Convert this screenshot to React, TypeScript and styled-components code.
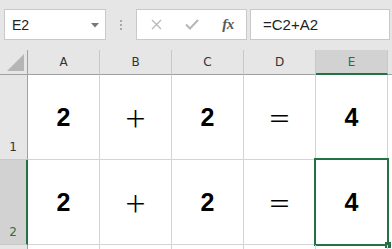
import React from "react";
import styled, { createGlobalStyle } from "styled-components";

const Global = createGlobalStyle`
  html, body { margin: 0; padding: 0; background: #ffffff; overflow: hidden; }
  body { font-family: "Liberation Sans", Arial, sans-serif; }
`;

const GREEN = "#217346";

const Page = styled.div`
  width: 392px;
  height: 249px;
  overflow: hidden;
  background: #fff;
`;

const Toolbar = styled.div`
  display: flex;
  align-items: flex-start;
  height: 50px;
  box-sizing: border-box;
  padding: 9px 2px 0 4px;
  background: #e6e6e6;
`;

const Box = styled.div<{ $w?: number }>`
  box-sizing: border-box;
  height: 31px;
  background: #ffffff;
  border: 1px solid #c9c9c9;
  display: flex;
  align-items: center;
  ${(p) => (p.$w ? `width: ${p.$w}px; flex: none;` : "flex: 1;")}
`;

const NameText = styled.span`
  flex: 1;
  padding-left: 7px;
  font-size: 14px;
  color: #222;
`;

const Arrow = styled.svg`
  width: 8px;
  height: 5px;
  margin-right: 6px;
  margin-top: 1px;
`;

const Dots = styled.div`
  width: 30px;
  height: 31px;
  display: flex;
  flex-direction: column;
  align-items: center;
  justify-content: center;
  gap: 2px;
  flex: none;
`;

const Dot = styled.span`
  width: 2px;
  height: 2px;
  background: #a8a8a8;
`;

const IconBtn = styled.div`
  width: 36px;
  height: 29px;
  display: flex;
  align-items: center;
  justify-content: center;
  flex: none;
`;

const Fx = styled.span`
  font-family: "Liberation Serif", "Times New Roman", serif;
  font-style: italic;
  font-weight: 700;
  font-size: 15px;
  color: #595959;
  letter-spacing: -0.5px;
`;

const FormulaText = styled.span`
  padding-left: 12px;
  font-size: 15px;
  color: #222;
`;

const Sheet = styled.div`
  display: grid;
  grid-template-columns: 28px repeat(5, 72px) 1fr;
  grid-template-rows: 25px 85px 85px 85px;
`;

const Corner = styled.div`
  box-sizing: border-box;
  background: #e6e6e6;
  border-right: 1px solid #a0a0a0;
  border-bottom: 1px solid #a0a0a0;
  display: flex;
  align-items: flex-end;
  justify-content: flex-end;
  padding: 0 3px 3px 0;
`;

const ColHead = styled.div<{ $sel?: boolean }>`
  box-sizing: border-box;
  background: ${(p) => (p.$sel ? "#d2d2d2" : "#e6e6e6")};
  border-right: 1px solid #c8c8c8;
  border-bottom: ${(p) => (p.$sel ? `2px solid ${GREEN}` : "1px solid #a0a0a0")};
  display: flex;
  align-items: center;
  justify-content: center;
  padding-top: ${(p) => (p.$sel ? "1px" : "0")};
  font-family: "DejaVu Sans", sans-serif;
  font-size: 12px;
  color: ${(p) => (p.$sel ? GREEN : "#333")};
`;

const HeadFill = styled.div`
  background: #e6e6e6;
  border-bottom: 1px solid #a0a0a0;
`;

const RowHead = styled.div<{ $sel?: boolean }>`
  box-sizing: border-box;
  background: ${(p) => (p.$sel ? "#d2d2d2" : "#e6e6e6")};
  border-right: ${(p) => (p.$sel ? `2px solid ${GREEN}` : "1px solid #a0a0a0")};
  border-bottom: 1px solid #c8c8c8;
  display: flex;
  align-items: flex-end;
  justify-content: center;
  padding: 0 ${(p) => (p.$sel ? "0" : "1px")} 5px 0;
  font-family: "DejaVu Sans", sans-serif;
  font-size: 12px;
  color: ${(p) => (p.$sel ? GREEN : "#333")};
`;

const Cell = styled.div<{ $op?: boolean }>`
  position: relative;
  box-sizing: border-box;
  border-right: 1px solid #d4d4d4;
  border-bottom: 1px solid #d4d4d4;
  display: flex;
  align-items: center;
  justify-content: center;
  color: #000;
  font-family: ${(p) =>
    p.$op
      ? `"Noto Sans CJK JP", "Noto Sans", sans-serif`
      : `"Liberation Sans", Arial, sans-serif`};
  font-weight: ${(p) => (p.$op ? 400 : 700)};
  font-size: ${(p) => (p.$op ? "23px" : "25px")};
`;

const Fill = styled.div``;

const Selection = styled.div`
  position: absolute;
  top: -2px;
  left: -2px;
  width: 75px;
  height: 88px;
  box-sizing: border-box;
  border: 2px solid ${GREEN};
  pointer-events: none;
`;

const Handle = styled.div`
  position: absolute;
  right: -4px;
  bottom: -4px;
  width: 6px;
  height: 6px;
  background: ${GREEN};
`;

const cols = ["A", "B", "C", "D", "E"];
const rowData = [
  ["2", "＋", "2", "＝", "4"],
  ["2", "＋", "2", "＝", "4"],
  ["", "", "", "", ""],
];

export default function App() {
  return (
    <Page>
      <Global />
      <Toolbar>
        <Box $w={102}>
          <NameText>E2</NameText>
          <Arrow viewBox="0 0 8 5">
            <path d="M0 0 L8 0 L4 4.5 Z" fill="#777" />
          </Arrow>
        </Box>
        <Dots>
          <Dot />
          <Dot />
          <Dot />
        </Dots>
        <Box $w={111}>
          <IconBtn style={{ marginLeft: 1 }}>
            <svg width="11" height="11" viewBox="0 0 11 11">
              <path d="M1 1 L10 10 M10 1 L1 10" stroke="#b8b8b8" strokeWidth="1.3" fill="none" />
            </svg>
          </IconBtn>
          <IconBtn>
            <svg width="14" height="11" viewBox="0 0 14 11">
              <path d="M1 5.5 L5 9.5 L13 1" stroke="#b8b8b8" strokeWidth="2" fill="none" />
            </svg>
          </IconBtn>
          <IconBtn>
            <Fx>fx</Fx>
          </IconBtn>
        </Box>
        <Box style={{ marginLeft: 3 }}>
          <FormulaText>=C2+A2</FormulaText>
        </Box>
      </Toolbar>
      <Sheet>
        <Corner>
          <svg width="17" height="17" viewBox="0 0 17 17">
            <path d="M17 0 L17 17 L0 17 Z" fill="#b5b5b5" />
          </svg>
        </Corner>
        {cols.map((c) => (
          <ColHead key={c} $sel={c === "E"}>
            {c}
          </ColHead>
        ))}
        <HeadFill />
        {rowData.map((row, ri) => (
          <React.Fragment key={ri}>
            <RowHead $sel={ri === 1}>{ri < 2 ? ri + 1 : ""}</RowHead>
            {row.map((v, ci) => (
              <Cell key={ci} $op={v === "＋" || v === "＝"}>
                {v}
                {ri === 1 && ci === 4 && (
                  <Selection>
                    <Handle />
                  </Selection>
                )}
              </Cell>
            ))}
            <Fill />
          </React.Fragment>
        ))}
      </Sheet>
    </Page>
  );
}
